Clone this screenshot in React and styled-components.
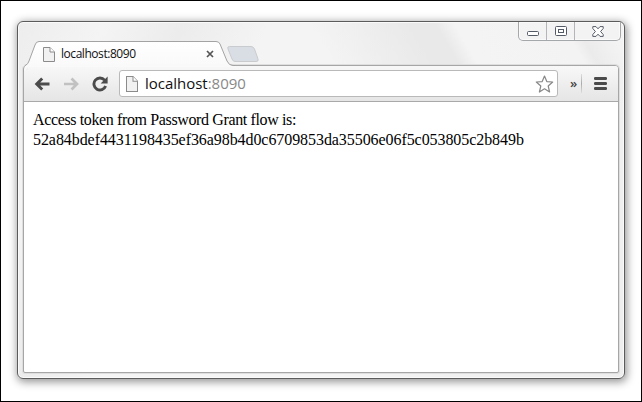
import React from "react";
import styled, { createGlobalStyle } from "styled-components";

const GlobalStyle = createGlobalStyle`
  * { box-sizing: border-box; }
  body { margin: 0; background: #fff; }
`;

const Page = styled.div`
  width: 642px;
  height: 402px;
  border: 1px solid #000;
  padding: 20px 16px 22px;
  background: #fff;
  overflow: hidden;
`;

const Window = styled.div`
  display: flex;
  flex-direction: column;
  width: 608px;
  height: 358px;
  border: 1px solid #5b5b5b;
  border-radius: 6px;
  padding: 0 5px 5px;
  background:
    linear-gradient(60deg, transparent 0, transparent 50%, #e9e9e9 66%, #e9e9e9 70%, #f4f4f4 73%, #f3f3f3 90%, #ebebeb 92%, #f3f3f3 97%) top / 100% 44px no-repeat,
    linear-gradient(115deg, #ededed 0, #f4f4f4 80px, #ececec 150px, #f4f4f4 230px, #f4f4f4 60%, #eeeeee 100%);
  box-shadow: inset 0 0 0 1px #fafafa, 1px 2px 8px 1px rgba(0, 0, 0, 0.42);
`;

const TitleBar = styled.div`
  display: flex;
  height: 43px;
  flex: none;
`;

const Tab = styled.div`
  position: relative;
  z-index: 1;
  display: flex;
  align-items: center;
  width: 212px;
  height: 25px;
  margin-top: 19px;
  padding: 1px 0 0 20px;
`;

const TabShape = styled.svg`
  position: absolute;
  left: 0;
  top: 0;
  z-index: -1;
`;

const TabTitle = styled.span`
  flex: none;
  width: 145px;
  margin-left: 6px;
  font: 12px/16px "Open Sans", "Noto Sans", sans-serif;
  letter-spacing: -0.45px;
  color: #111;
`;

const NewTab = styled.svg`
  margin: 23px 0 0 -9px;
  z-index: 1;
`;

const Controls = styled.div`
  display: flex;
  width: 103px;
  height: 19px;
  margin-left: auto;
  margin-right: -2px;
  border: 1px solid #a5a8ab;
  border-top: 0;
  border-radius: 0 0 5px 5px;
  background: #f3f3f3;
  box-shadow: inset 0 0 0 1px #fafafa;
`;

const Control = styled.div`
  display: flex;
  align-items: center;
  justify-content: center;
  width: ${(p) => p.$width}px;
  padding-top: ${(p) => p.$drop || 0}px;
  border-left: ${(p) => (p.$divided ? "1px solid #b3b5b7" : "0")};
`;

const Frame = styled.div`
  display: flex;
  flex-direction: column;
  flex: 1;
  border: 1px solid #a6a6a6;
  border-radius: 4px 4px 2px 2px;
  background: #fff;
  box-shadow: 0 0 0 1px #dedede;
`;

const Toolbar = styled.div`
  display: flex;
  align-items: center;
  height: 36px;
  flex: none;
  padding: 0 11px 0 10px;
  border-bottom: 1px solid #a9a9a9;
  border-radius: 3px 3px 0 0;
  background: linear-gradient(#f8f8f8, #e5e5e5);
`;

const NavButton = styled.svg`
  flex: none;
  margin-right: ${(p) => p.$gap}px;
`;

const Omnibox = styled.div`
  display: flex;
  align-items: center;
  flex: none;
  width: 439px;
  height: 27px;
  padding: 0 3px 0 6px;
  border: 1px solid #b9b9b9;
  border-radius: 3px;
  background: #fff;
`;

const Address = styled.span`
  flex: 1;
  margin: -2px 0 0 7px;
  font: 15px/20px "Open Sans", "Noto Sans", sans-serif;
  letter-spacing: -0.02px;
  color: #111;
`;

const Port = styled.span`
  color: #888;
`;

const Overflow = styled.span`
  width: 15px;
  margin-left: 8px;
  padding-bottom: 2px;
  font: 600 13px/18px "Open Sans", sans-serif;
  color: #444;
  text-align: center;
`;

const Divider = styled.span`
  width: 1px;
  height: 19px;
  margin-right: 12px;
  background: linear-gradient(#ddd, #aaa, #ddd);
`;

const Content = styled.main`
  padding: 8px 9px;
  font: 16px/20px "Liberation Serif", serif;
  color: #000;
`;

const Line = styled.div`
  white-space: nowrap;
  letter-spacing: ${(p) => p.$spacing || 0}px;
`;

function PageIcon({ height = 15 }) {
  return (
    <svg width="12" height={height} viewBox="0 0 12 15" preserveAspectRatio="none">
      <path d="M.5.5H7l4.5 4.5v9.5H.5z" fill="#f1f1f1" stroke="#8b8b8b" />
      <path d="M7 .5V5h4.5" fill="#fff" stroke="#8b8b8b" />
    </svg>
  );
}

export default function App() {
  return (
    <>
      <GlobalStyle />
      <Page>
        <Window>
          <TitleBar>
            <Tab>
              <TabShape width="212" height="31" viewBox="0 0 212 31">
                <defs>
                  <linearGradient id="tabFill" x1="0" y1="0" x2="0" y2="1">
                    <stop offset="0" stopColor="#fff" />
                    <stop offset="1" stopColor="#f8f8f8" />
                  </linearGradient>
                </defs>
                <path d="M0 24h5v5H0z" fill="#f0f0f0" />
                <path
                  d="M.5 31V28Q.5 25 3 24Q5 23 6 20L12 4Q13 .5 16 .5H193Q196 .5 197 3L204 20Q206 24.5 210 24.5V26H5L1 31z"
                  fill="url(#tabFill)"
                />
                <path
                  d="M.5 31V28Q.5 25 3 24Q5 23 6 20L12 4Q13 .5 16 .5H193Q196 .5 197 3L204 20Q206 24.5 210 24.5H212"
                  fill="none"
                  stroke="#a3a3a3"
                />
              </TabShape>
              <PageIcon />
              <TabTitle>localhost:8090</TabTitle>
              <svg width="8" height="8" viewBox="0 0 8 8">
                <path d="M1 1l6 6M7 1L1 7" stroke="#555" strokeWidth="1.7" />
              </svg>
            </Tab>
            <NewTab width="34" height="18" viewBox="0 0 34 18">
              <path
                d="M3.5 1.5H25Q27.5 1.5 28.5 4L32 14Q33 16.5 30 16.5H9Q7 16.5 6 14L2 4Q1 1.5 3.5 1.5z"
                fill="#d9dee5"
                stroke="#c9cbce"
              />
            </NewTab>
            <Controls>
              <Control $width={27} $drop={4}>
                <svg width="13" height="5">
                  <rect x="1.5" y=".5" width="11" height="4" rx="1" fill="#fff" stroke="#555b66" />
                </svg>
              </Control>
              <Control $width={28} $divided>
                <svg width="12" height="10">
                  <rect x=".5" y=".5" width="11" height="9" rx="1" fill="#fff" stroke="#555b66" />
                  <rect x="3.5" y="3.5" width="5" height="3" fill="#fff" stroke="#555b66" />
                </svg>
              </Control>
              <Control $width={46} $divided>
                <svg width="12" height="11" viewBox="0 0 12 11">
                  <path
                    d="M.8.6H4L6 2.8 8 .6h3.2v1.9L8.6 5.5l2.6 3v1.9H8L6 8.2l-2 2.2H.8V8.5l2.6-3L.8 2.5z"
                    fill="#fff"
                    stroke="#555b66"
                    strokeLinejoin="round"
                  />
                </svg>
              </Control>
            </Controls>
          </TitleBar>
          <Frame>
            <Toolbar>
              <NavButton $gap={12} width="17" height="14" viewBox="0 0 17 14">
                <path d="M8.2 1.5L2.7 7l5.5 5.5M3 7h12.5" fill="none" stroke="#4b4b4b" strokeWidth="2.9" />
              </NavButton>
              <NavButton $gap={12} width="17" height="14" viewBox="0 0 17 14">
                <path d="M8.5 1.5L14 7l-5.5 5.5M14 7H1" fill="none" stroke="#c1c1c1" strokeWidth="2.7" />
              </NavButton>
              <NavButton $gap={11} width="16" height="16" viewBox="0 0 16 16">
                <path d="M12.6 4.2A6 6 0 1 0 13.6 10" fill="none" stroke="#4b4b4b" strokeWidth="2.9" />
                <path d="M15.6.6v7H8.6z" fill="#4b4b4b" />
              </NavButton>
              <Omnibox>
                <PageIcon height={16} />
                <Address>
                  localhost<Port>:8090</Port>
                </Address>
                <svg width="19" height="18" viewBox="0 0 19 18">
                  <path
                    d="M9.5 1l2.3 5.6 5.9.4-4.5 4 1.4 6-5.1-3.2L4.4 17l1.4-6-4.5-4 5.9-.4z"
                    fill="#fff"
                    stroke="#888"
                    strokeWidth="1.2"
                    strokeLinejoin="round"
                  />
                </svg>
              </Omnibox>
              <Overflow>»</Overflow>
              <Divider />
              <svg width="13" height="13" viewBox="0 0 13 13">
                <path d="M1.3 1.5h10.4M1.3 6.5h10.4M1.3 11.5h10.4" stroke="#4b4b4b" strokeWidth="2.8" strokeLinecap="round" />
              </svg>
            </Toolbar>
            <Content>
              <Line $spacing={-0.37}>Access token from Password Grant flow is:</Line>
              <Line $spacing={-0.07}>52a84bdef4431198435ef36a98b4d0c6709853da35506e06f5c053805c2b849b</Line>
            </Content>
          </Frame>
        </Window>
      </Page>
    </>
  );
}
